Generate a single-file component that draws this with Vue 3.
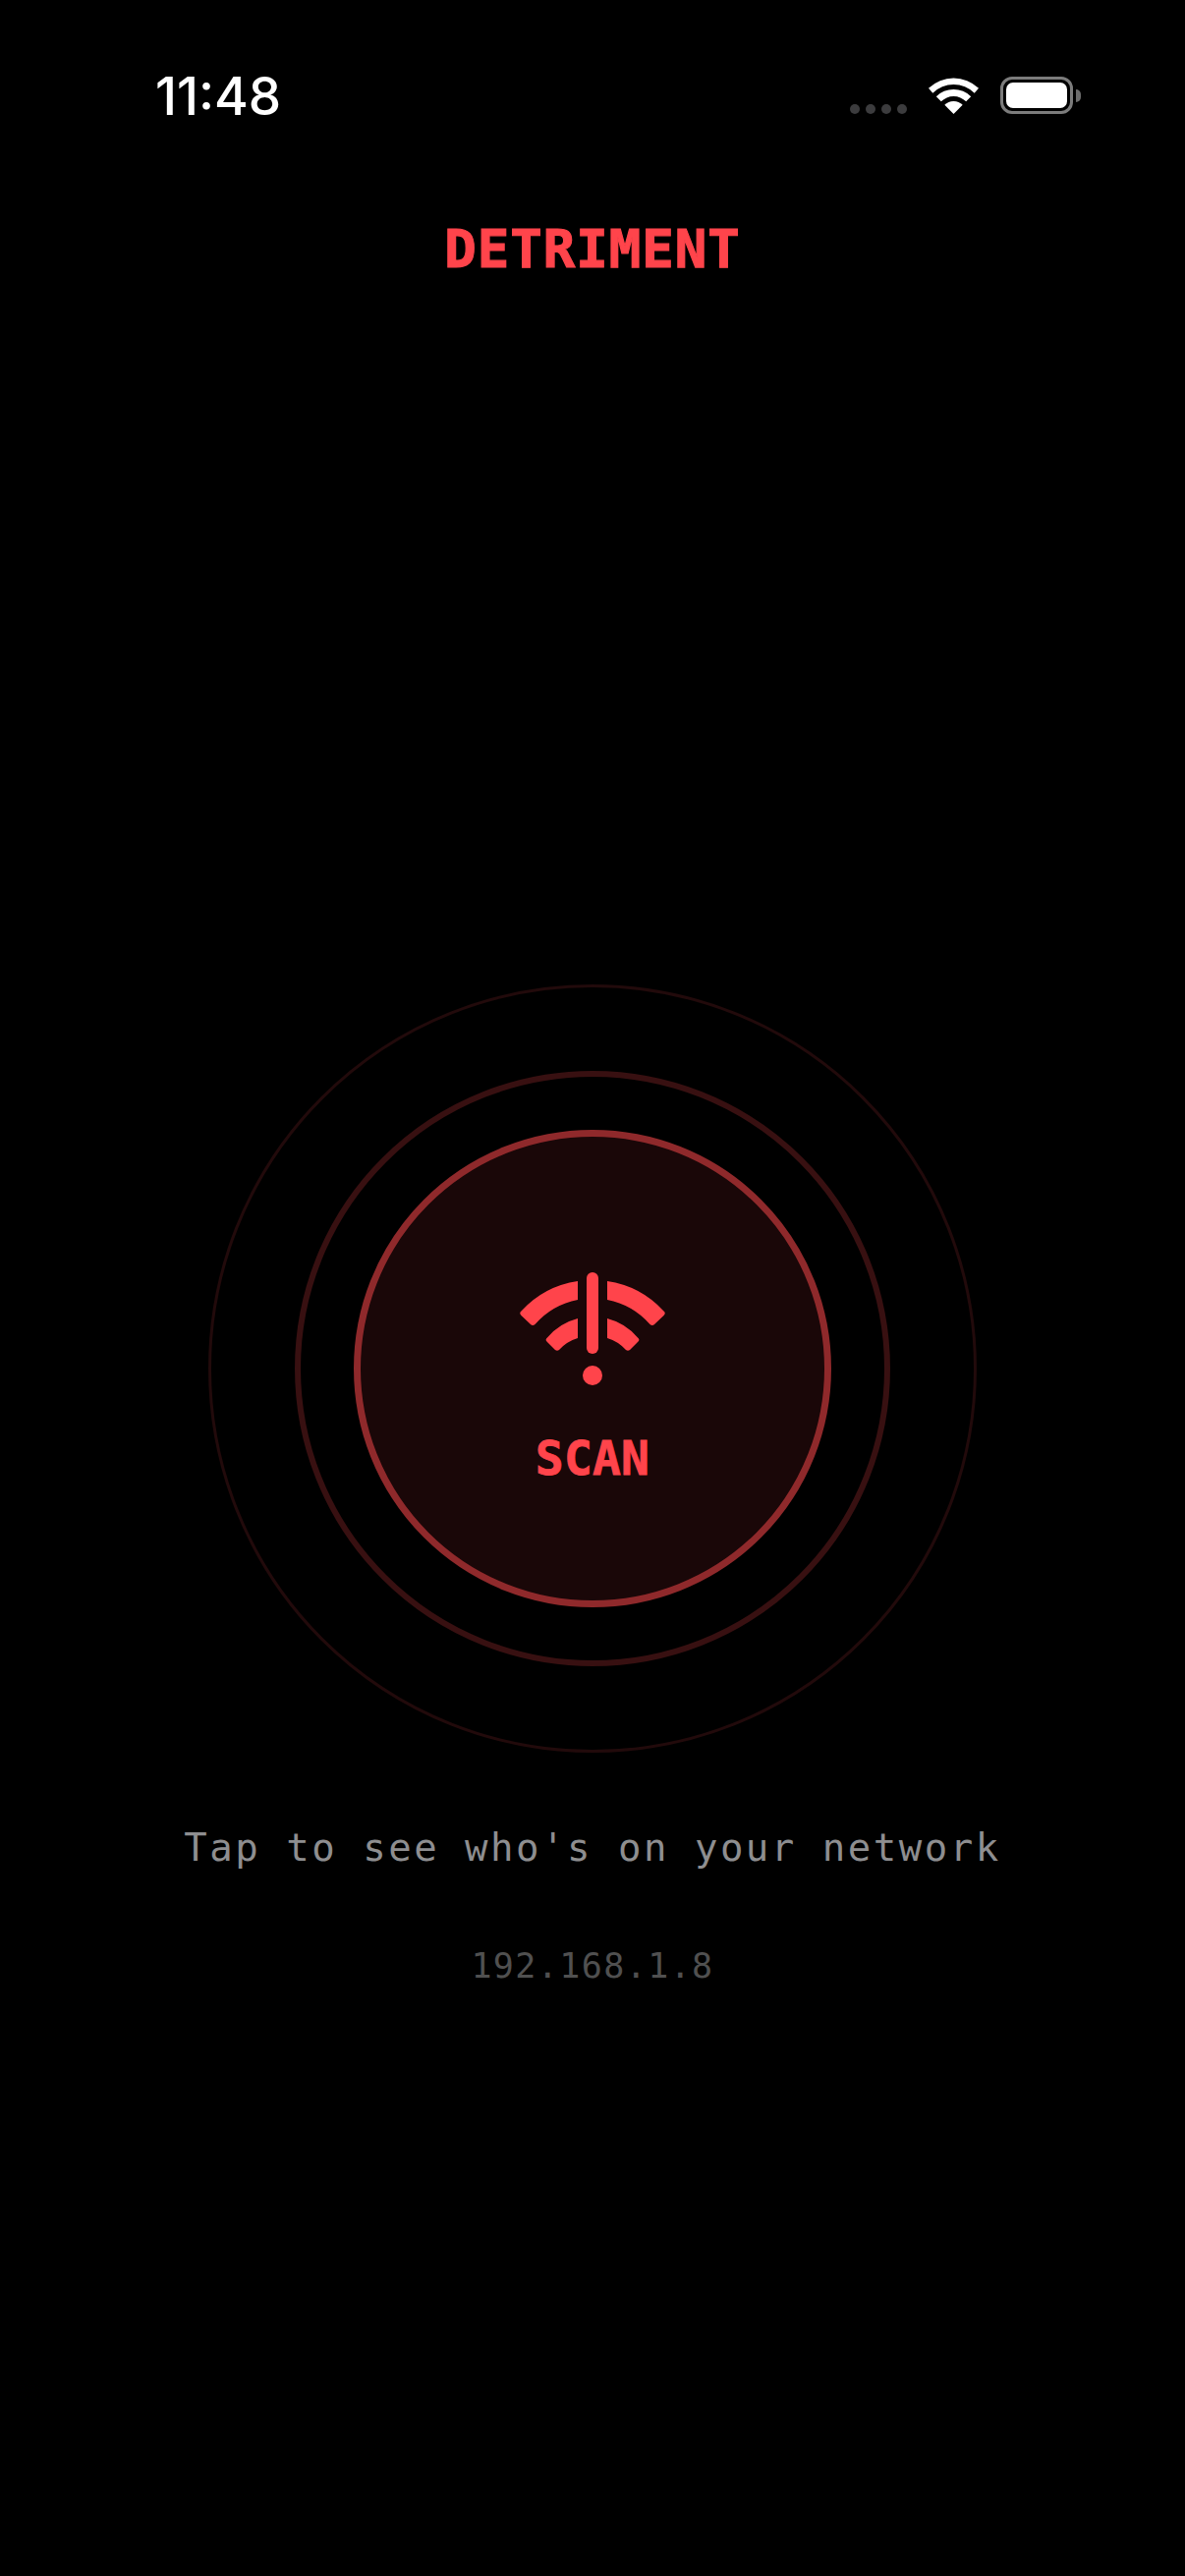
<script setup>
const dots = [1, 2, 3, 4]
</script>

<template>
  <main class="screen">
    <header class="status">
      <span class="time">11:48</span>
      <div class="status-icons">
        <div class="signal">
          <i v-for="d in dots" :key="d"></i>
        </div>
        <svg class="wifi" viewBox="0 0 51 37" width="51" height="37">
          <path d="M0 10.7A37 37 0 0 1 51 10.7L46.7 15.8A30 30 0 0 0 4.3 15.8Z" />
          <path d="M7.8 19.3A25 25 0 0 1 43.2 19.3L38.2 24.3A18 18 0 0 0 12.8 24.3Z" />
          <path d="M16.3 27.8A13 13 0 0 1 34.7 27.8L25.5 37Z" />
        </svg>
        <div class="battery">
          <div class="battery-body"><div class="battery-fill"></div></div>
          <div class="battery-nub"></div>
        </div>
      </div>
    </header>

    <h1 class="title">DETRIMENT</h1>

    <section class="scanner">
      <div class="ring-outer">
        <div class="ring-mid">
          <button type="button" class="scan-btn">
            <svg class="scan-icon" viewBox="-76 -105 152 115" width="152" height="115">
              <path d="M-15 -96A97 97 0 0 0 -72.5 -65.5Q-75 -63.5 -72.5 -61L-63 -52Q-61 -50 -58.5 -52A78 78 0 0 1 -15 -77Z" />
              <path d="M-15 -58A60 60 0 0 0 -46 -38.5Q-48.5 -36.5 -46.5 -34.5L-38 -26Q-36 -24.5 -34 -26A42 42 0 0 1 -15 -38Z" />
              <g transform="scale(-1 1)">
                <path d="M-15 -96A97 97 0 0 0 -72.5 -65.5Q-75 -63.5 -72.5 -61L-63 -52Q-61 -50 -58.5 -52A78 78 0 0 1 -15 -77Z" />
                <path d="M-15 -58A60 60 0 0 0 -46 -38.5Q-48.5 -36.5 -46.5 -34.5L-38 -26Q-36 -24.5 -34 -26A42 42 0 0 1 -15 -38Z" />
              </g>
              <rect x="-6" y="-105" width="12" height="83" rx="6" />
              <circle cx="0" cy="0" r="10" />
            </svg>
            <span class="scan-label">SCAN</span>
          </button>
        </div>
      </div>
      <p class="hint">Tap to see who's on your network</p>
      <p class="ip">192.168.1.8</p>
    </section>
  </main>
</template>

<style scoped>
.screen {
  width: 1206px;
  height: 2622px;
  background: #000;
  display: flex;
  flex-direction: column;
  align-items: center;
  overflow: hidden;
  font-family: "DejaVu Sans Mono", "Liberation Mono", monospace;
}
.status {
  width: 100%;
  box-sizing: border-box;
  height: 38px;
  margin-top: 78px;
  padding: 0 106px 0 158px;
  display: flex;
  justify-content: space-between;
  align-items: center;
}
.time {
  padding-top: 2px;
  font-family: Inter, "Liberation Sans", sans-serif;
  font-weight: 500;
  font-size: 53px;
  line-height: 38px;
  color: #fff;
}
.status-icons {
  display: flex;
  align-items: flex-end;
  gap: 22px;
}
.signal {
  display: flex;
  gap: 6px;
}
.signal i {
  width: 10px;
  height: 10px;
  border-radius: 50%;
  background: #3c3c3e;
}
.wifi {
  display: block;
  fill: #fff;
}
.battery {
  display: flex;
  align-items: center;
  gap: 3px;
}
.battery-body {
  width: 74px;
  height: 38px;
  box-sizing: border-box;
  border: 3px solid #7c7c7c;
  border-radius: 12px;
  padding: 3px;
}
.battery-fill {
  height: 100%;
  background: #fff;
  border-radius: 7px;
}
.battery-nub {
  width: 5px;
  height: 13px;
  background: #6c6c6c;
  border-radius: 0 6px 6px 0;
}
.title {
  margin: 108px 0 0;
  font-size: 54px;
  line-height: 60px;
  font-weight: 700;
  letter-spacing: 1px;
  color: #ff444b;
  -webkit-text-stroke: 1.2px #ff444b;
}
.scanner {
  margin-top: 718px;
  display: flex;
  flex-direction: column;
  align-items: center;
}
.ring-outer,
.ring-mid,
.scan-btn {
  box-sizing: border-box;
  border-radius: 50%;
  display: flex;
  align-items: center;
  justify-content: center;
}
.ring-outer {
  width: 782px;
  height: 782px;
  border: 3px solid #220a0b;
}
.ring-mid {
  width: 606px;
  height: 606px;
  border: 6px solid #381011;
}
.scan-btn {
  width: 486px;
  height: 486px;
  border: 7px solid #8f292b;
  background: #1a0708;
  flex-direction: column;
  justify-content: flex-start;
  padding: 138px 0 0;
  font-family: inherit;
}
.scan-icon {
  display: block;
  fill: #ff444b;
}
.scan-label {
  margin-top: 49px;
  font-size: 48px;
  line-height: 50px;
  font-weight: 700;
  letter-spacing: 0.2px;
  color: #ff444b;
  -webkit-text-stroke: 0.8px #ff444b;
}
.hint {
  margin: 72px 0 0;
  font-size: 39px;
  line-height: 50px;
  letter-spacing: 2.5px;
  color: #8e8e90;
}
.ip {
  margin: 73px 0 0;
  font-size: 35px;
  line-height: 44px;
  letter-spacing: 1.4px;
  color: #505050;
}
</style>

<style>
html,
body {
  margin: 0;
  background: #000;
}
</style>
